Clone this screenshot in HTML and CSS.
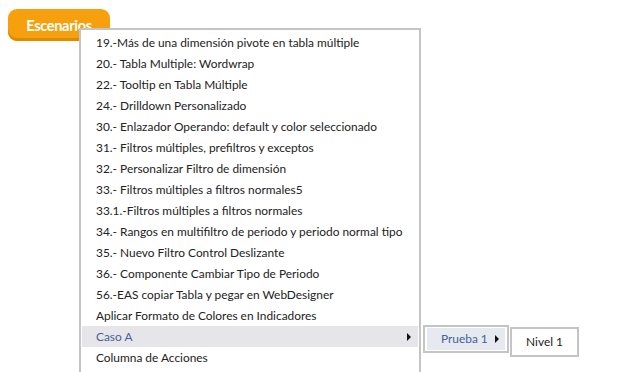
FILE: index.html
```html
<!DOCTYPE html>
<html lang="es">
<head>
  <meta charset="UTF-8">
  <meta name="viewport" content="width=device-width, initial-scale=1.0">
  <title>Escenarios</title>
  <link rel="stylesheet" href="styles.css">
</head>
<body>
  <!-- Boton de escenarios -->
  <div class="toolbar">
    <button class="btn-escenarios">Escenarios</button>
  </div>

  <!-- Menu desplegable -->
  <ul class="menu">
    <li>19.-Más de una dimensión pivote en tabla múltiple</li>
    <li>20.- Tabla Multiple: Wordwrap</li>
    <li>22.- Tooltip en Tabla Múltiple</li>
    <li>24.- Drilldown Personalizado</li>
    <li>30.- Enlazador Operando: default y color seleccionado</li>
    <li>31.- Filtros múltiples, prefiltros y exceptos</li>
    <li>32.- Personalizar Filtro de dimensión</li>
    <li>33.- Filtros múltiples a filtros normales5</li>
    <li>33.1.-Filtros múltiples a filtros normales</li>
    <li>34.- Rangos en multifiltro de periodo y periodo normal tipo</li>
    <li>35.- Nuevo Filtro Control Deslizante</li>
    <li>36.- Componente Cambiar Tipo de Periodo</li>
    <li>56.-EAS copiar Tabla y pegar en WebDesigner</li>
    <li>Aplicar Formato de Colores en Indicadores</li>
    <li class="active has-sub">Caso A</li>
    <li>Columna de Acciones</li>
  </ul>

  <!-- Submenus -->
  <ul class="submenu sub-1">
    <li class="active has-sub">Prueba 1</li>
  </ul>
  <ul class="submenu sub-2">
    <li>Nivel 1</li>
  </ul>
</body>
</html>
```

FILE: styles.css
```css
/* General */
body {
  margin: 0;
  font-family: Lato, "Open Sans", sans-serif;
  background: #ffffff;
  color: #222;
  position: relative;
  height: 372px;
  overflow: hidden;
}

/* Toolbar */
.toolbar {
  padding: 9px 8px;
}

.btn-escenarios {
  display: block;
  width: 102px;
  height: 32px;
  border: none;
  border-radius: 9px;
  background: #f5a00c;
  box-shadow: inset 0 -3px 0 #e08a00;
  color: #fff;
  font-family: Lato, sans-serif;
  font-weight: bold;
  font-size: 14.5px;
  letter-spacing: -0.3px;
  padding: 0;
}

/* Menu */
.menu,
.submenu {
  list-style: none;
  margin: 0;
  background: #fff;
  border: 2px solid #c4c4c4;
  position: absolute;
}

.menu {
  left: 79px;
  top: 28px;
  width: 336px;
  padding: 2px 1px 40px 1px;
}

.menu li {
  height: 21px;
  line-height: 21px;
  padding-left: 14px;
  font-size: 11.9px;
  white-space: nowrap;
  position: relative;
}

.menu li.active {
  background: #e6e6ea;
  color: #44609a;
}

.has-sub::after {
  content: "";
  position: absolute;
  right: 7px;
  top: 7px;
  border-left: 4px solid #111;
  border-top: 4px solid transparent;
  border-bottom: 4px solid transparent;
}

/* Submenus */
.submenu {
  padding: 1px 2px;
}

.sub-1 {
  left: 423px;
  top: 325px;
  width: 78px;
}

.sub-1 li {
  height: 22px;
  line-height: 22px;
  font-size: 11.9px;
  padding-left: 14px;
  background: #e6e9ef;
  color: #44609a;
  position: relative;
}

.sub-1 .has-sub::after {
  right: 6px;
  top: 7px;
}

.sub-2 {
  left: 510px;
  top: 327px;
  width: 65px;
  padding: 0;
}

.sub-2 li {
  height: 26px;
  line-height: 26px;
  text-align: center;
  font-size: 11.9px;
  color: #222;
}
```
